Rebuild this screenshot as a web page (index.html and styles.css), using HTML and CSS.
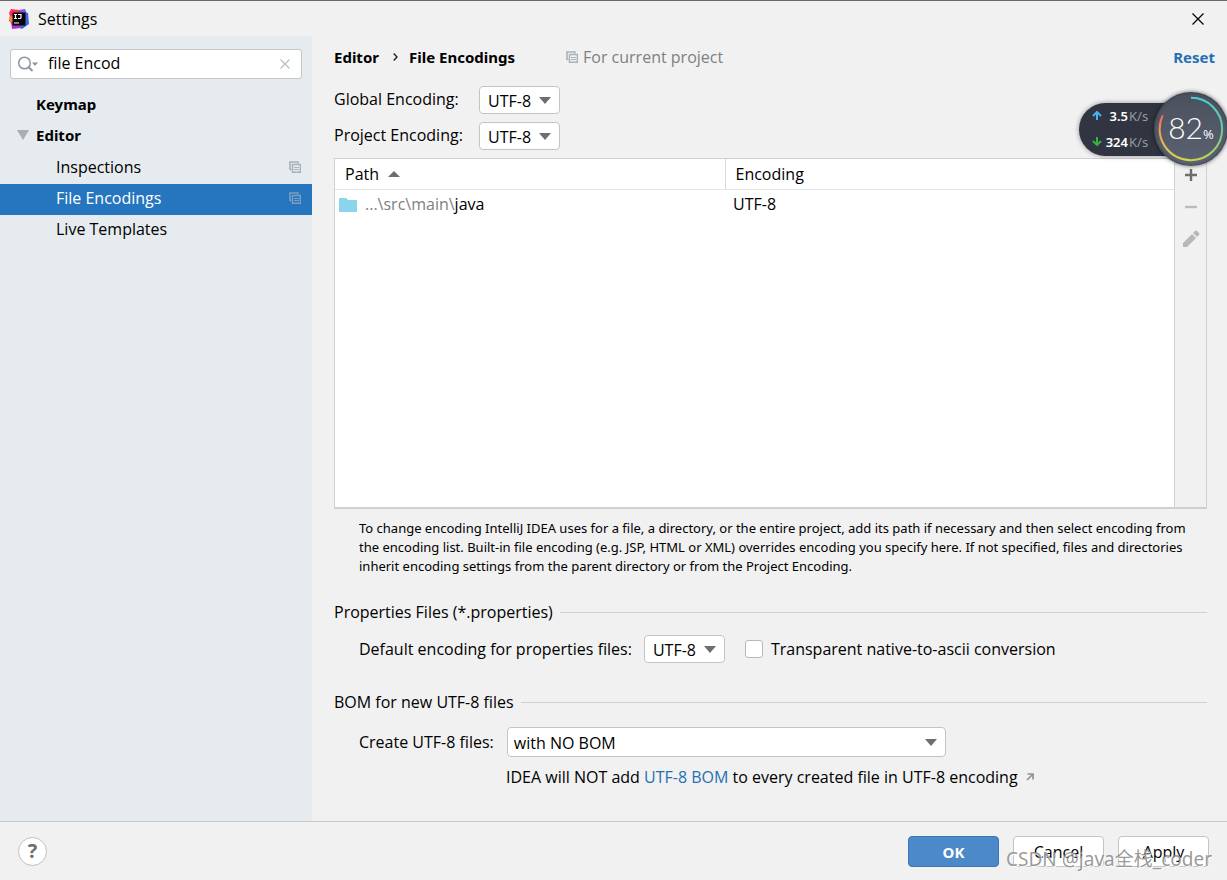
FILE: index.html
```html
<!DOCTYPE html>
<html lang="en">
<head>
<meta charset="utf-8">
<title>Settings</title>
<link rel="stylesheet" href="styles.css">
</head>
<body>
<svg class="defs" width="0" height="0" aria-hidden="true">
  <symbol id="copy" viewBox="0 0 12 12"><path d="M1 9V1h8v1.500M1 8.500h1.500" fill="none" stroke="currentColor" stroke-width="1.600"/><path d="M3.500 3.500h7.800v7.800H3.500z" fill="none" stroke="currentColor" stroke-width="1.400"/><path d="M5 6.500h5M5 8.500h5" stroke="currentColor"/></symbol>
  <symbol id="down" viewBox="0 0 12 7"><path d="M0 0h12L6 7z" fill="currentColor"/></symbol>
</svg>
<header class="titlebar">
  <svg class="logo" viewBox="0 0 20 20" aria-hidden="true">
    <path d="M2 0l8 1 3 5-9 9-4-3 1-5-1-3z" fill="#fc3159"/>
    <path d="M0 8l4-1 2 6-4 2z" fill="#f78c2b"/>
    <path d="M13 2l6 2 1 11-7 5-6-3z" fill="#3d67df"/>
    <path d="M2 13l8 1 2 5-9 1z" fill="#b02fd0"/>
    <path d="M10 1l6-1 2 5-8 1z" fill="#7c55dd"/>
    <path d="M3.500 3.500h13v13h-13z" fill="#050505"/>
    <path d="M5 5.500h3M6.500 5.500v4M5 9.500h3M9 5.500h3v3q0 1-1 1H9M5 14h5" fill="none" stroke="#fff" stroke-width="1.200"/>
  </svg>
  <h1 class="title">Settings</h1>
  <button class="close" aria-label="Close"><svg width="12" height="12" viewBox="0 0 12 12"><path d="M.5.5l11 11M11.500.5l-11 11" stroke="#000" stroke-width="1.200"/></svg></button>
</header>
<div class="main">
  <aside class="sidebar">
    <div class="search">
      <svg width="21" height="16" viewBox="0 0 21 16" aria-hidden="true"><circle cx="6.500" cy="7" r="5.800" fill="none" stroke="#8b96a0" stroke-width="1.500"/><path d="M10.500 11l4 4" stroke="#8b96a0" stroke-width="2"/><path d="M14 6.500h6L17 10z" fill="#8b96a0"/></svg>
      <input class="search-input" type="text" value="file Encod" aria-label="Search settings">
      <button class="clear" aria-label="Clear"><svg width="10" height="10" viewBox="0 0 10 10"><path d="M.5.5l9 9M9.500.5l-9 9" stroke="#b9c0c6" stroke-width="1.200"/></svg></button>
    </div>
    <nav class="tree">
      <a class="node group" href="#">Keymap</a>
      <a class="node group" href="#"><svg class="expander" width="12" height="10" viewBox="0 0 12 10"><path d="M0 0h12L6 10z" fill="#adadad"/></svg>Editor</a>
      <a class="node leaf first" href="#">Inspections<svg class="copy" width="12" height="12"><use href="#copy"/></svg></a>
      <a class="node leaf selected" href="#">File Encodings<svg class="copy" width="12" height="12"><use href="#copy"/></svg></a>
      <a class="node leaf" href="#">Live Templates</a>
    </nav>
  </aside>
  <main class="content">
    <div class="crumbs">
      <b>Editor</b>
      <svg width="5" height="8" viewBox="0 0 5 8"><path d="M.7.5L4 4 .7 7.500" fill="none" stroke="#222" stroke-width="1.400"/></svg>
      <b>File Encodings</b>
      <span class="scope"><svg class="copy" width="12" height="12"><use href="#copy"/></svg>For current project</span>
      <a class="reset" href="#">Reset</a>
    </div>
    <div class="encodings">
      <label for="global">Global Encoding:</label>
      <span class="combo"><select id="global"><option>UTF-8</option></select><svg class="arrow" width="12" height="7"><use href="#down"/></svg></span>
      <label for="project">Project Encoding:</label>
      <span class="combo"><select id="project"><option>UTF-8</option></select><svg class="arrow" width="12" height="7"><use href="#down"/></svg></span>
    </div>
    <div class="panel">
      <div class="table-area">
        <table class="table">
          <thead><tr><th class="path-col">Path<svg class="sort" width="12" height="6" viewBox="0 0 12 6"><path d="M0 6h12L6 0z" fill="#6e6e6e"/></svg></th><th>Encoding</th></tr></thead>
          <tbody><tr><td><svg class="folder" width="18" height="14" viewBox="0 0 18 14"><path d="M0 0h7l2 2h9v12H0z" fill="#8ad4ec"/></svg><span class="dim">...\src\main\</span>java</td><td>UTF-8</td></tr></tbody>
        </table>
      </div>
      <div class="tools">
        <button aria-label="Add"><svg width="14" height="14" viewBox="0 0 14 14"><path d="M7 1v12M1 7h12" stroke="#6e6e6e" stroke-width="2.400"/></svg></button>
        <button aria-label="Remove"><svg width="14" height="14" viewBox="0 0 14 14"><path d="M1 7h12" stroke="#bcbcbc" stroke-width="2.400"/></svg></button>
        <button aria-label="Edit"><svg width="18" height="18" viewBox="0 0 18 18"><path d="M1 17v-4l9-9 4 4-9 9zM11 3l2-2q1-1 2 0l2 2q1 1 0 2l-2 2z" fill="#b8b8b8"/></svg></button>
      </div>
    </div>
    <p class="hint">To change encoding IntelliJ IDEA uses for a file, a directory, or the entire project, add its path if necessary and then select encoding from the encoding list. Built-in file encoding (e.g. JSP, HTML or XML) overrides encoding you specify here. If not specified, files and directories inherit encoding settings from the parent directory or from the Project Encoding.</p>
    <h2 class="section">Properties Files (*.properties)</h2>
    <div class="row props">
      <label for="defenc">Default encoding for properties files:</label>
      <span class="combo"><select id="defenc"><option>UTF-8</option></select><svg class="arrow" width="12" height="7"><use href="#down"/></svg></span>
      <label class="check"><input type="checkbox">Transparent native-to-ascii conversion</label>
    </div>
    <h2 class="section">BOM for new UTF-8 files</h2>
    <div class="row bom">
      <label for="bom">Create UTF-8 files:</label>
      <span class="combo"><select id="bom"><option>with NO BOM</option></select><svg class="arrow" width="12" height="7"><use href="#down"/></svg></span>
    </div>
    <p class="note">IDEA will NOT add <a href="#">UTF-8 BOM</a> to every created file in UTF-8 encoding<svg class="ext" width="8" height="8" viewBox="0 0 8 8"><path d="M1 7l5-5M1.500 1H7v5.500" fill="none" stroke="#8a9299" stroke-width="1.700"/></svg></p>
  </main>
</div>
<footer class="footer">
  <button class="help" aria-label="Help">?</button>
  <button class="btn primary">OK</button>
  <button class="btn">Cancel</button>
  <button class="btn">Apply</button>
</footer>
<div class="monitor">
  <div class="speeds">
    <div class="speed"><svg width="10" height="9" viewBox="0 0 10 9"><path d="M5 9V2M1 5l4-4 4 4" fill="none" stroke="#49b3f0" stroke-width="2"/></svg><b>3.5</b><span>K/s</span></div>
    <div class="speed"><svg width="10" height="9" viewBox="0 0 10 9"><path d="M5 0v7M1 4l4 4 4-4" fill="none" stroke="#35b53f" stroke-width="2"/></svg><b>324</b><span>K/s</span></div>
  </div>
  <div class="gauge">
    <svg class="ring" viewBox="0 0 76 76" aria-hidden="true">
      <defs>
        <linearGradient id="g1" x1="0" y1="0" x2="0" y2="1"><stop offset="0" stop-color="#45d3d6"/><stop offset=".5" stop-color="#5fd0a0"/><stop offset="1" stop-color="#c4d84e"/></linearGradient>
        <linearGradient id="g2" x1="0" y1="0" x2="0" y2="1"><stop offset="0" stop-color="#f0645a"/><stop offset=".4" stop-color="#f0a850"/><stop offset="1" stop-color="#d6d84c"/></linearGradient>
      </defs>
      <path d="M38 6a32 32 0 0 1 0 64" fill="none" stroke="url(#g1)" stroke-width="2"/>
      <path d="M38 70A32 32 0 0 1 9 24" fill="none" stroke="url(#g2)" stroke-width="2"/>
    </svg>
    <span class="num">82</span><span class="pct">%</span>
  </div>
</div>
<div class="watermark">CSDN @java全栈_coder</div>
</body>
</html>
```

FILE: styles.css
```css
* { box-sizing: border-box; }
body {
  margin: 0;
  min-height: 100vh;
  display: flex;
  flex-direction: column;
  position: relative;
  overflow: hidden;
  background: #f1f1f1;
  color: #000;
  font-family: "Open Sans", "Noto Sans", "Noto Sans CJK SC", sans-serif;
  font-size: 16px;
  line-height: 20px;
}
button, input, select { font: inherit; color: inherit; }
button { padding: 0; border: 0; background: none; }
a { text-decoration: none; color: #2470b3; }
svg { flex: none; }
.defs { position: absolute; }
.crumbs b, .reset, .group, .primary, .hint, .speeds {
  font-family: "Noto Sans", "Open Sans", sans-serif;
  font-size: 15px;
}

.titlebar {
  height: 36px;
  display: flex;
  align-items: center;
  padding: 0 23px 0 9px;
  border-top: 1px solid #6b696b;
}
.logo { width: 20px; height: 20px; }
.title { margin: 0 auto 0 9px; font-size: 16px; font-weight: 400; }
.close { display: flex; }

.main { flex: 1; display: flex; }
.sidebar { width: 312px; flex: none; background: #e5ebef; }
.search {
  display: flex;
  align-items: center;
  height: 30px;
  margin: 13px 10px 10px;
  padding: 0 11px 0 7px;
  background: #fff;
  border: 1px solid #c4c4c4;
  border-radius: 3px;
}
.search-input {
  flex: 1;
  min-width: 0;
  height: 24px;
  margin-left: 9px;
  padding: 0 0 2px;
  border: 0;
  outline: 0;
  background: none;
}
.clear { display: flex; }
.tree { display: flex; flex-direction: column; }
.node {
  display: flex;
  align-items: center;
  height: 31px;
  padding-right: 11px;
  color: #000;
}
.group { position: relative; padding-left: 36px; padding-bottom: 1px; font-weight: 700; }
.leaf { padding-left: 56px; padding-bottom: 3px; }
.first { margin-top: 2px; }
.expander { position: absolute; left: 17px; top: 10px; }
.copy { color: #a9b2ba; }
.node .copy { margin-left: auto; }
.selected { background: #2675bf; color: #fff; }
.selected .copy { color: #7a9fc2; }

.content {
  flex: 1;
  min-width: 0;
  display: flex;
  flex-direction: column;
  padding: 11px 20px 34px 22px;
}
.crumbs { display: flex; align-items: center; }
.crumbs > svg { margin: 0 11px 0 14px; }
.scope { display: flex; align-items: center; gap: 5px; margin-left: 51px; color: #808080; }
.reset { margin-left: auto; margin-right: -8px; font-weight: 700; }
.encodings {
  display: grid;
  grid-template-columns: 145px 81px;
  row-gap: 8px;
  margin: 19px 0 8px;
}
.encodings label { line-height: 26px; }
.combo { position: relative; display: flex; width: 81px; height: 28px; }
.combo select {
  appearance: none;
  width: 100%;
  padding: 1px 0 0 8px;
  border: 1px solid #c4c4c4;
  border-radius: 4px;
  background: #fff;
}
.arrow { position: absolute; right: 9px; top: 11px; color: #6e6e6e; pointer-events: none; }

.panel {
  flex: 1;
  display: flex;
  border: 1px solid #d0d0d0;
  border-bottom-width: 2px;
}
.table-area { flex: 1; background: #fff; }
.table { width: 100%; border-collapse: collapse; table-layout: fixed; }
.table th {
  height: 30px;
  padding: 0 10px;
  border-bottom: 1px solid #e4e4e4;
  text-align: left;
  font-weight: 400;
}
.table .path-col { width: 390px; border-right: 1px solid #d8d8d8; }
.sort { margin-left: 9px; vertical-align: 3px; }
.table td { height: 30px; padding: 0 8px; }
.table td:first-child { padding-left: 4px; }
.folder { margin-right: 8px; vertical-align: -2px; }
.dim { color: #808080; }
.tools {
  width: 32px;
  display: flex;
  flex-direction: column;
  align-items: center;
  border-left: 1px solid #d0d0d0;
}
.tools button { display: flex; align-items: center; justify-content: center; height: 32px; }

.hint { margin: 10px 0 0; padding-left: 25px; font-size: 13px; line-height: 19px; }
.section {
  display: flex;
  align-items: center;
  gap: 7px;
  margin: 26px 0 0;
  font-size: 16px;
  font-weight: 400;
}
.section::after { content: ""; flex: 1; height: 1px; background: #d0d0d0; }
.row { display: flex; align-items: center; padding-left: 25px; }
.props { margin: 13px 0 3px; }
.props .combo { margin-left: 12px; }
.check { display: flex; align-items: center; margin-left: 20px; }
.check input {
  appearance: none;
  width: 18px;
  height: 18px;
  margin: 0 8px 0 0;
  background: #fff;
  border: 1px solid #b8b8b8;
  border-radius: 3px;
}
.bom { margin-top: 15px; }
.bom .combo { width: 439px; height: 30px; margin-left: 13px; }
.bom select { padding-left: 6px; }
.bom .arrow { top: 12px; }
.note { margin: 10px 0 0; padding-left: 172px; }
.ext { margin-left: 8px; vertical-align: 2px; }

.footer {
  height: 59px;
  display: flex;
  align-items: center;
  gap: 14px;
  padding: 0 18px;
  border-top: 1px solid #c9c9c9;
}
.help {
  width: 29px;
  height: 29px;
  margin-right: auto;
  border: 1px solid #c0c0c0;
  border-radius: 50%;
  background: #fff;
  color: #6e6e6e;
  font-size: 20px;
  font-weight: 700;
}
.btn {
  width: 91px;
  height: 31px;
  padding-top: 2px;
  border: 1px solid #c4c4c4;
  border-radius: 4px;
  background: #fff;
}
.primary { border-color: #3d76b5; background: #4c89c9; color: #fff; font-weight: 700; }

.monitor {
  position: absolute;
  top: 92px;
  right: -1px;
  display: flex;
  align-items: center;
  color: #fff;
}
.speeds {
  width: 101px;
  height: 53px;
  margin-right: -26px;
  padding: 0 13px;
  border-radius: 27px 0 0 27px;
  background: #303541;
  box-shadow: 0 0 5px #0006;
  font-size: 13px;
}
.speed { display: grid; grid-template-columns: 10px 25px 22px; align-items: center; gap: 1px; height: 26px; }
.speed b { text-align: right; font-weight: 600; }
.speed span { color: #9599a3; }
.gauge {
  position: relative;
  display: flex;
  align-items: baseline;
  justify-content: center;
  width: 74px;
  height: 74px;
  border-radius: 50%;
  background: linear-gradient(#4b505e, #5d6272);
  box-shadow: 0 0 4px #0009, inset 0 0 3px #2d323c;
}
.ring { position: absolute; inset: 0; }
.num { font-family: Lato, sans-serif; font-weight: 300; font-size: 30px; line-height: 70px; }
.pct { font-size: 13px; }
.watermark {
  position: absolute;
  right: 15px;
  bottom: 8px;
  color: #808080cc;
  text-shadow: 1px 1px 1px #fff;
  font-family: "Noto Sans", "Noto Sans CJK SC", sans-serif;
  font-size: 19px;
  line-height: 26px;
  white-space: nowrap;
  pointer-events: none;
}
```
